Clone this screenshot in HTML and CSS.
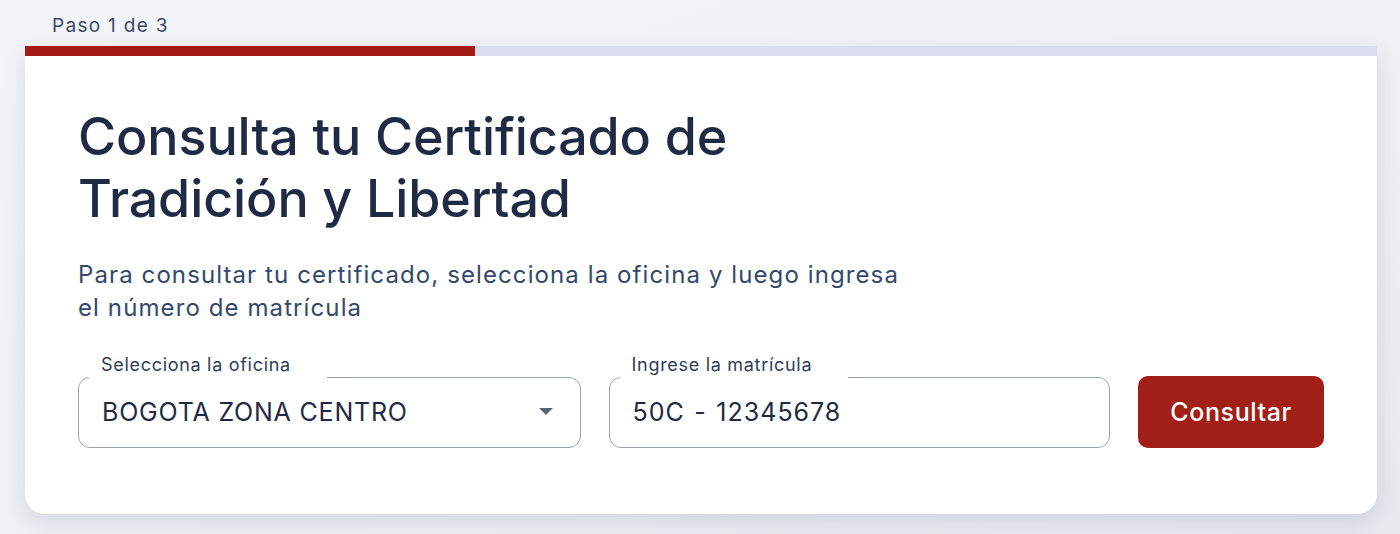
FILE: index.html
```html
<!DOCTYPE html>
<html>
<head>
    <title>Consulta tu Certificado</title>
    <link rel="stylesheet" href="styles.css">
</head>
<body>
    <div class="page">
        <div class="step">Paso 1 de 3</div>

        <div class="card">
            <div class="progress">
                <div class="progress-fill"></div>
            </div>

            <div class="card-body">
                <h1>Consulta tu Certificado de<br>Tradición y Libertad</h1>
                <p class="intro">Para consultar tu certificado, selecciona la oficina y luego ingresa<br>el número de matrícula</p>

                <div class="form-row">
                    <div class="field field-select">
                        <span class="field-label">Selecciona la oficina</span>
                        <span class="field-value">BOGOTA ZONA CENTRO</span>
                        <svg class="caret" width="14" height="8" viewBox="0 0 14 8">
                            <path d="M0 0 L14 0 L7 7 Z" fill="#5b6273"/>
                        </svg>
                    </div>

                    <div class="field">
                        <span class="field-label">Ingrese la matrícula</span>
                        <span class="field-value matricula">50C - 12345678</span>
                    </div>

                    <button class="submit">Consultar</button>
                </div>
            </div>
        </div>
    </div>
</body>
</html>
```

FILE: styles.css
```css
body {
    margin: 0;
    font-family: Inter, "Noto Sans", Arial, sans-serif;
    background: linear-gradient(160deg, #f3f4f8 0%, #eef0f5 60%, #e7e9ef 100%);
    min-height: 534px;
    color: #1f2a44;
}

.page {
    padding: 12px 23px 20px 25px;
}

.step {
    padding-left: 27px;
    font-size: 19px;
    line-height: 28px;
    letter-spacing: 1.3px;
    color: #3b4a66;
    height: 34px;
}

/* Card */
.card {
    background-color: #fff;
    border-radius: 0 0 20px 20px;
    box-shadow: 0 8px 22px rgba(40, 50, 80, 0.13);
}

.progress {
    height: 10px;
    background-color: #d8dcee;
}

.progress-fill {
    width: 450px;
    height: 100%;
    background-color: #a31a14;
}

.card-body {
    padding: 50px 53px 66px 53px;
}

h1 {
    margin: 0;
    font-size: 52px;
    line-height: 62px;
    font-weight: 500;
    color: #1f2a44;
    letter-spacing: -0.1px;
}

.intro {
    margin: 28px 0 0 0;
    font-size: 24px;
    line-height: 33px;
    letter-spacing: 1.1px;
    color: #34486c;
}

/* Form */
.form-row {
    display: flex;
    align-items: center;
    gap: 28px;
    margin-top: 52px;
}

.field {
    position: relative;
    width: 503px;
    height: 71px;
    box-sizing: border-box;
    border: 1px solid #9ca2ad;
    border-radius: 12px;
    display: flex;
    align-items: center;
    padding: 0 23px;
}

.field + .field {
    width: 502px;
}

.field-label {
    position: absolute;
    left: 10px;
    top: -27px;
    height: 30px;
    line-height: 28px;
    padding: 0 36px 0 12px;
    background-color: #fff;
    font-size: 18px;
    letter-spacing: 0.7px;
    color: #2f3d58;
}

.field-value {
    font-size: 25px;
    letter-spacing: 0.8px;
    color: #1f2a44;
    flex: 1;
}

.matricula {
    letter-spacing: 1px;
    word-spacing: 1.5px;
}

.caret {
    margin-right: 4px;
}

.submit {
    width: 186px;
    height: 72px;
    border: none;
    border-radius: 10px;
    background-color: #a21f18;
    color: #fff;
    font-family: Inter, "Noto Sans", Arial, sans-serif;
    font-size: 25px;
    font-weight: 500;
    letter-spacing: 0.6px;
    cursor: pointer;
}
```
